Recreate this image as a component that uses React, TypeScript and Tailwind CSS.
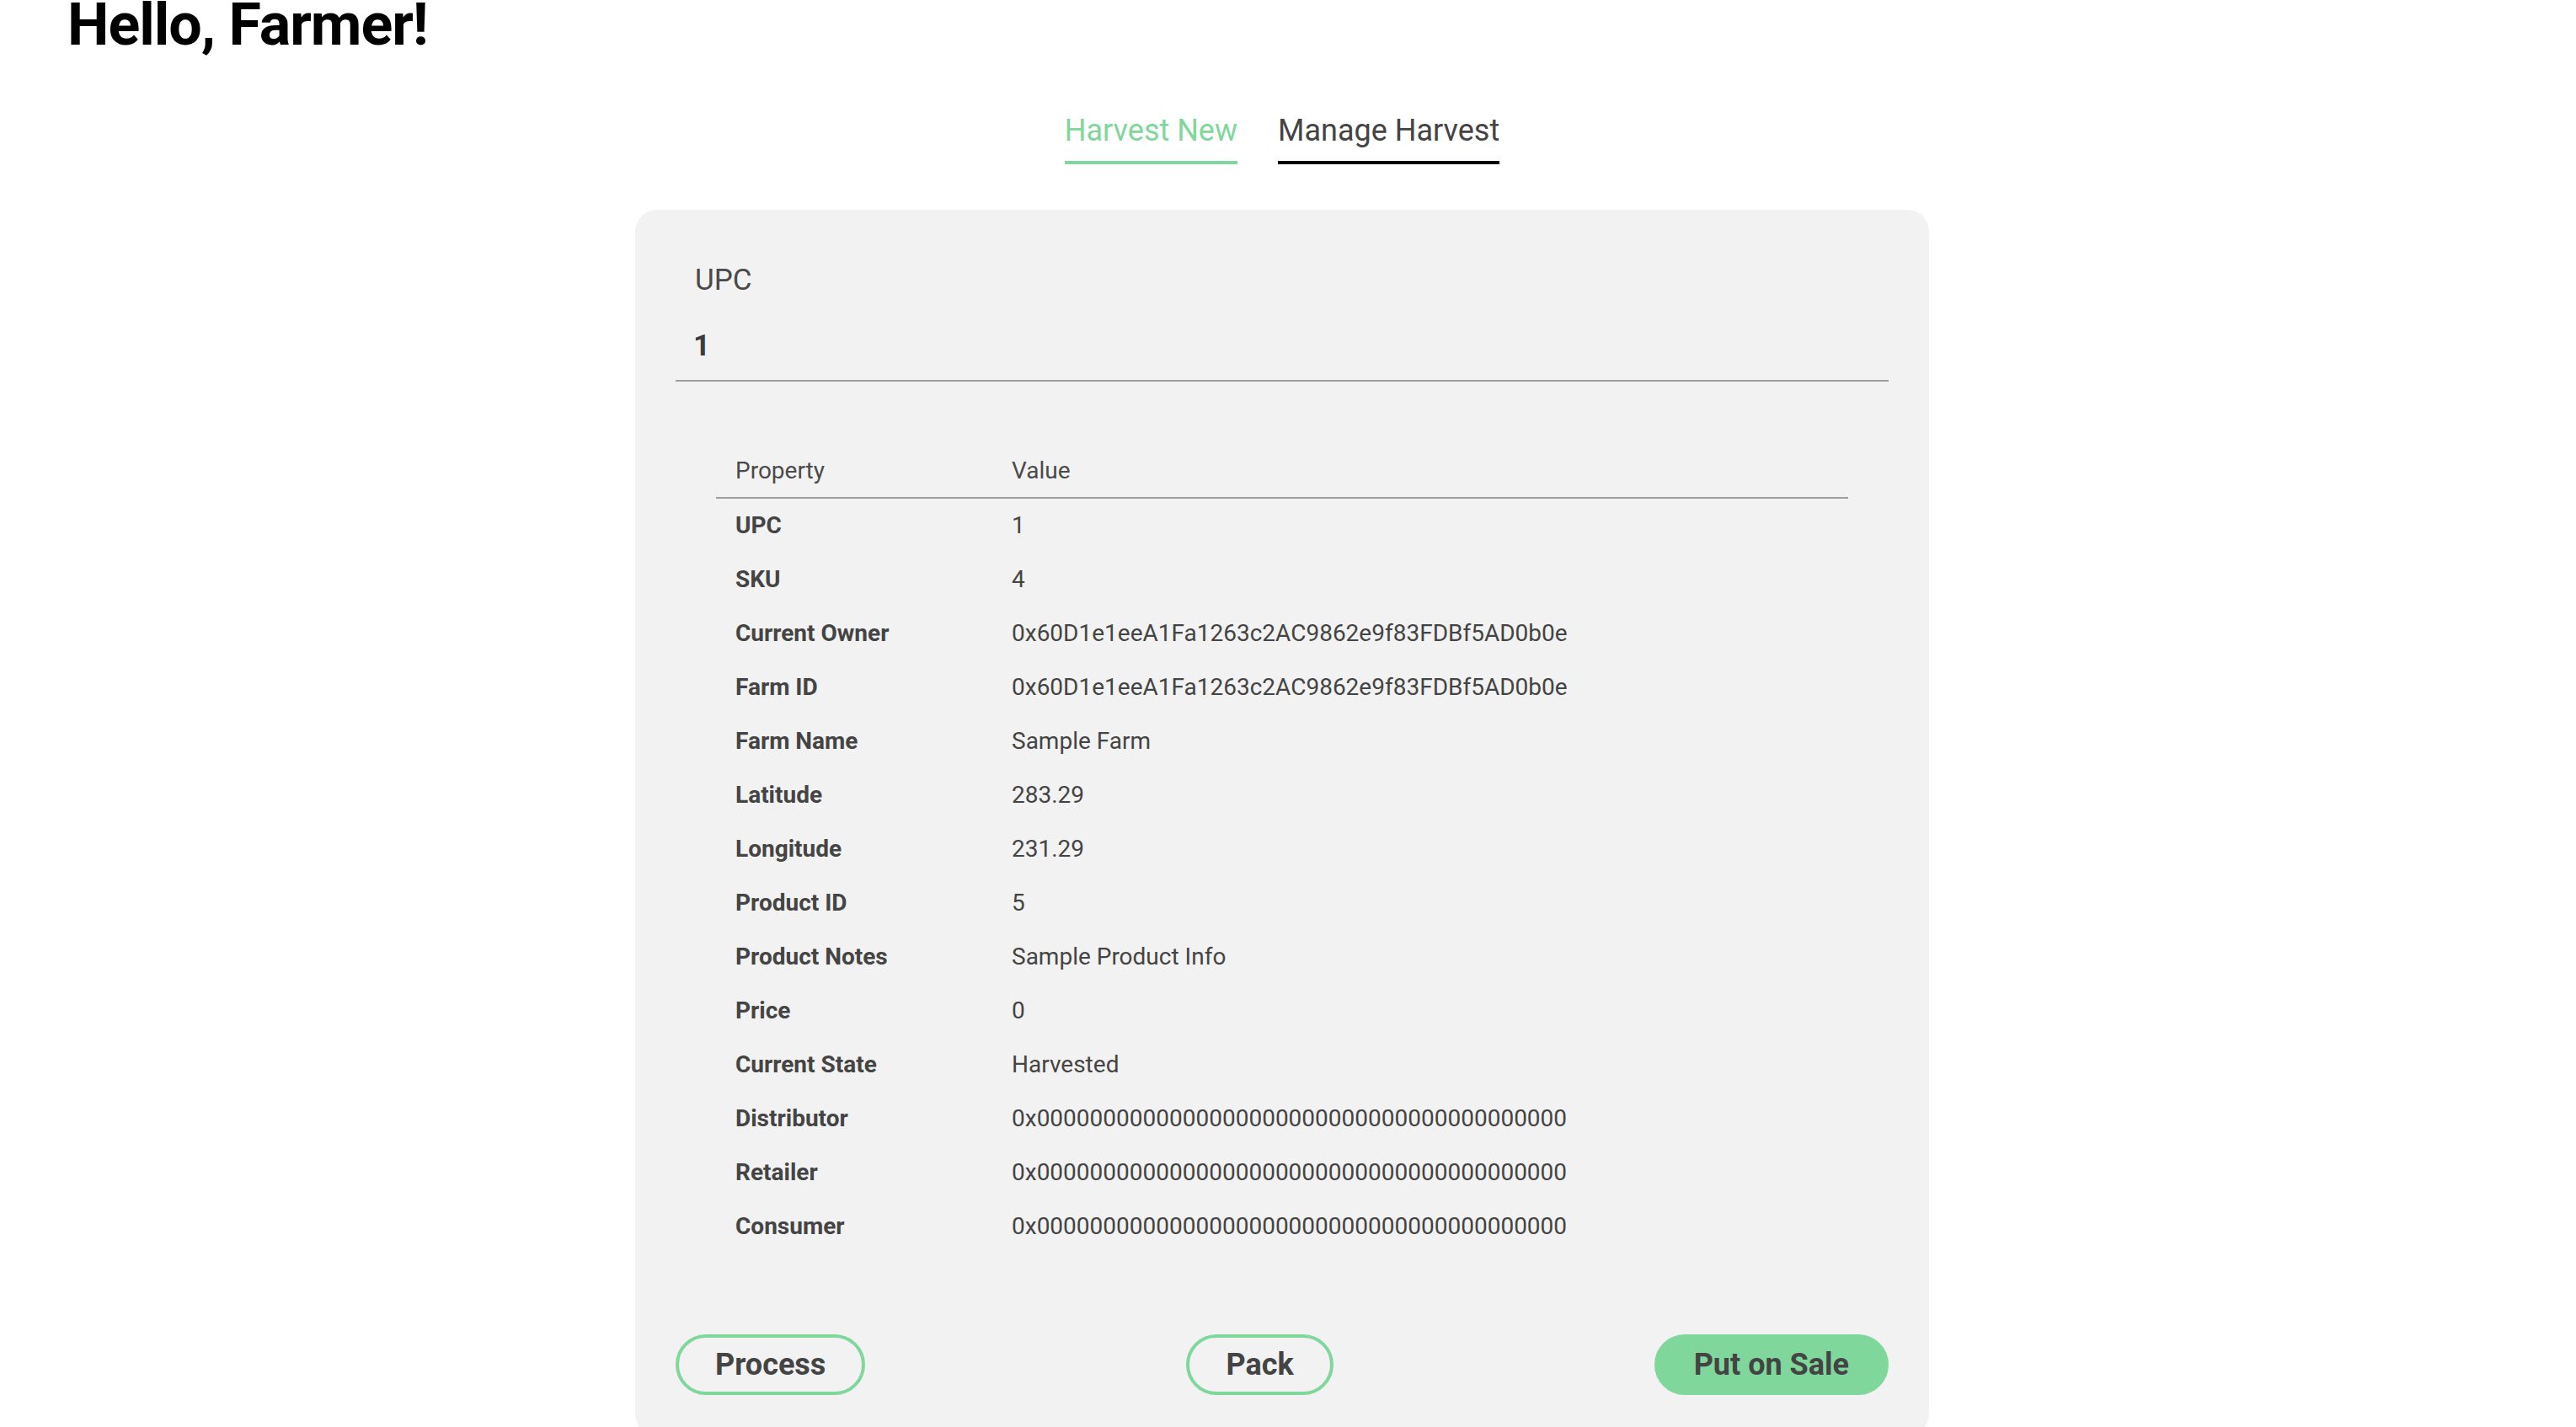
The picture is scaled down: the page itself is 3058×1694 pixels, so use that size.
import React from "react";

const rows: [string, string][] = [
  ["UPC", "1"],
  ["SKU", "4"],
  ["Current Owner", "0x60D1e1eeA1Fa1263c2AC9862e9f83FDBf5AD0b0e"],
  ["Farm ID", "0x60D1e1eeA1Fa1263c2AC9862e9f83FDBf5AD0b0e"],
  ["Farm Name", "Sample Farm"],
  ["Latitude", "283.29"],
  ["Longitude", "231.29"],
  ["Product ID", "5"],
  ["Product Notes", "Sample Product Info"],
  ["Price", "0"],
  ["Current State", "Harvested"],
  ["Distributor", "0x0000000000000000000000000000000000000000"],
  ["Retailer", "0x0000000000000000000000000000000000000000"],
  ["Consumer", "0x0000000000000000000000000000000000000000"],
];

export default function App() {
  return (
    <div
      className="h-[1694px] overflow-hidden bg-white"
      style={{ fontFamily: "Roboto, 'Liberation Sans', sans-serif" }}
    >
      <div className="w-[3044px] flex flex-col">
        <h1 className="-mt-[12px] pl-[80px] text-[70px] leading-[82px] font-bold tracking-[-1px] text-black">
          Hello, Farmer!
        </h1>

        <div className="mt-[64px] flex justify-center gap-[48px]">
          <div className="text-[36px] leading-[42px] text-[#7fd79b] pb-[15px] border-b-4 border-[#7fd79b]">
            Harvest New
          </div>
          <div className="text-[36px] leading-[42px] text-[#444444] pb-[15px] border-b-4 border-black">
            Manage Harvest
          </div>
        </div>

        <div className="mt-[54px] mx-auto w-[1536px] bg-[#f2f2f2] rounded-[26px] px-[48px] pt-[63px] pb-[48px]">
          <div className="border-b-2 border-[#9e9e9e]">
            <div className="pl-[23px] text-[35px] leading-[41px] text-[#4a4a4a]">UPC</div>
            <div className="mt-[37px] pb-[20px] pl-[21px] text-[35px] leading-[41px] font-bold text-[#3c3c3c]">
              1
            </div>
          </div>

          <div className="mt-[75px] mx-[48px]">
            <div className="grid grid-cols-[351px_1fr] h-[64px] items-center border-b-2 border-[#9e9e9e] text-[28px] leading-[42px] text-[#4a4a4a]">
              <div className="pl-[23px]">Property</div>
              <div>Value</div>
            </div>
            {rows.map(([k, v]) => (
              <div
                key={k}
                className="grid grid-cols-[351px_1fr] h-[64px] items-center text-[28px] leading-[42px] text-[#444444]"
              >
                <div className="pl-[23px] font-bold">{k}</div>
                <div>{v}</div>
              </div>
            ))}
          </div>

          <div className="mt-[96px] flex justify-between items-center">
            <button className="h-[72px] px-[43px] rounded-full border-4 border-[#7fd79b] text-[36px] font-bold text-[#444444]">
              Process
            </button>
            <button className="h-[72px] px-[43px] rounded-full border-4 border-[#7fd79b] text-[36px] font-bold text-[#444444]">
              Pack
            </button>
            <button className="h-[72px] px-[43px] rounded-full border-4 border-[#7fd79b] bg-[#7fd79b] text-[36px] font-bold text-[#444444]">
              Put on Sale
            </button>
          </div>
        </div>
      </div>
    </div>
  );
}
